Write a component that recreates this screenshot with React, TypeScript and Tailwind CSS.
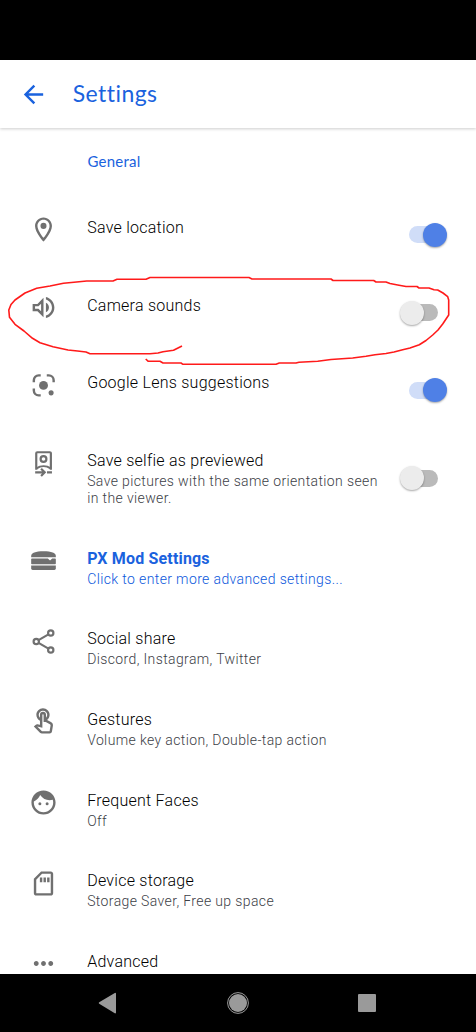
import { useState } from 'react';
import type { ReactNode } from 'react';
import {
  MdArrowBack,
  MdFace,
  MdMoreHoriz,
  MdOutlineLocationOn,
  MdOutlineSdCard,
  MdOutlineTouchApp,
  MdOutlineVolumeUp,
} from 'react-icons/md';

type Setting = {
  title: string;
  summary?: string;
  icon: ReactNode;
  toggle?: boolean;
  highlight?: boolean;
};

function LensIcon() {
  return (
    <svg viewBox="0 0 24 24" className="w-[29px] h-[29px]" fill="none" stroke="currentColor" strokeWidth="2">
      <path d="M4 9.3V7.6a4 4 0 0 1 4-4h1.7M14.7 3.6h1.7a4 4 0 0 1 4 4v1.7M4 14.5v1.7a4 4 0 0 0 4 4h1.7" />
      <circle cx="12" cy="11.9" r="3.7" fill="currentColor" stroke="none" />
      <circle cx="18.3" cy="18.1" r="2.1" fill="currentColor" stroke="none" />
    </svg>
  );
}

function SelfieIcon() {
  return (
    <svg viewBox="0 0 24 24" className="w-[29px] h-[29px]" fill="none" stroke="currentColor" strokeWidth="1.8">
      <path d="M6 17.2V3.5a.8.8 0 0 1 .8-.8h10.5a.8.8 0 0 1 .8.8v13.7" />
      <path d="M6.2 16c3.5-2.3 8.2-2.3 11.7 0" />
      <circle cx="12" cy="8.3" r="2.4" />
      <path d="M5.1 19.3h7M10 16.3l3 3-3 3M14.9 19.3H19" />
    </svg>
  );
}

function BurgerIcon() {
  return (
    <svg viewBox="0 0 24 24" className="w-[29px] h-[29px]" fill="currentColor">
      <path d="M1.8 8.2C1.8 5.6 5.5 4.3 12 4.3s10.2 1.3 10.2 3.9v1.2H1.8z" />
      <path d="M2.4 10.4h13.2l1.8 1.7 1.8-1.7h2.4a.6.6 0 0 1 .6.6v3.4a.6.6 0 0 1-.6.6H2.4a.6.6 0 0 1-.6-.6V11a.6.6 0 0 1 .6-.6z" />
      <path d="M1.8 16.2h20.4v2.4a1.2 1.2 0 0 1-1.2 1.2H3a1.2 1.2 0 0 1-1.2-1.2z" />
    </svg>
  );
}

function ShareIcon() {
  return (
    <svg viewBox="0 0 24 24" className="w-[29px] h-[29px]" fill="none" stroke="currentColor" strokeWidth="1.8">
      <circle cx="18" cy="5" r="2.2" />
      <circle cx="6" cy="12" r="2.2" />
      <circle cx="18" cy="19" r="2.2" />
      <path d="M7.9 10.9l8.2-4.8M7.9 13.1l8.2 4.8" />
    </svg>
  );
}

const settings: Setting[] = [
  { title: 'Save location', icon: <MdOutlineLocationOn size={29} />, toggle: true },
  { title: 'Camera sounds', icon: <MdOutlineVolumeUp size={29} />, toggle: false },
  { title: 'Google Lens suggestions', icon: <LensIcon />, toggle: true },
  {
    title: 'Save selfie as previewed',
    summary: 'Save pictures with the same orientation seen in the viewer.',
    icon: <SelfieIcon />,
    toggle: false,
  },
  {
    title: 'PX Mod Settings',
    summary: 'Click to enter more advanced settings...',
    icon: <BurgerIcon />,
    highlight: true,
  },
  { title: 'Social share', summary: 'Discord, Instagram, Twitter', icon: <ShareIcon /> },
  { title: 'Gestures', summary: 'Volume key action, Double-tap action', icon: <MdOutlineTouchApp size={29} /> },
  { title: 'Frequent Faces', summary: 'Off', icon: <MdFace size={29} /> },
  { title: 'Device storage', summary: 'Storage Saver, Free up space', icon: <MdOutlineSdCard size={29} /> },
  { title: 'Advanced', icon: <MdMoreHoriz size={29} /> },
];

function Toggle({ label, initial }: { label: string; initial: boolean }) {
  const [on, setOn] = useState(initial);

  return (
    <button
      role="switch"
      aria-checked={on}
      aria-label={label}
      onClick={() => setOn(!on)}
      className={`relative shrink-0 self-center w-[29px] h-[17px] mr-[38px] rounded-full ${on ? 'bg-[#d0ddf8]' : 'bg-[#bababa]'}`}
    >
      <span
        className={`absolute -top-[3.5px] w-6 h-6 rounded-full shadow-[0_1px_2px_rgba(0,0,0,0.35)] ${on ? 'left-[14px] bg-[#4f80e6]' : '-left-[9.5px] bg-[#ececec]'}`}
      />
    </button>
  );
}

function SettingRow({ title, summary, icon, toggle, highlight }: Setting) {
  return (
    <div className={`flex shrink-0 ${summary ? 'min-h-[80.6px]' : 'h-[77.8px]'}`}>
      <div className="w-[87.2px] shrink-0 pt-[19.2px] pl-[29px] text-[#707070]">{icon}</div>
      <div className="flex-1 pt-[20.8px] pb-[19.4px]">
        <div className={`text-base leading-[21px] ${highlight ? 'font-bold tracking-[0.17px] text-[#1a62de]' : 'font-light tracking-[0.25px] text-black'}`}>
          {title}
        </div>
        {summary && (
          <div className={`mt-[2px] w-[296px] text-sm leading-[17.2px] font-light tracking-[0.375px] ${highlight ? 'text-[#0b57dc]' : 'text-[#3c4046]'}`}>
            {summary}
          </div>
        )}
      </div>
      {toggle !== undefined && <Toggle label={title} initial={toggle} />}
    </div>
  );
}

// Freehand red loop drawn round the "Camera sounds" row
function Scribble() {
  return (
    <svg className="absolute left-0 top-0 pointer-events-none" width="476" height="1032" fill="none" stroke="#ff1a1a" strokeWidth="1.6" strokeLinejoin="round">
      <path d="M182 346L173.5 350.3L163 351.7L158 353L150 353.7H90L86 352L77.5 351L68 350L53 346.7L40 342.7L32.5 338.3L24 331L15 324.3L9.5 317.3L8.8 310L11 304.5L15 300L25 293L36.7 288.3L50 286L63.5 283.3L74 282.3L86.7 281H113L117 279.3H146L150 277.5H249L252 279H331L333 280.5H373.7L376 282H386L390 283.5L397.7 285L406 286.5H417L419 288H429L434 289.8L437.7 290L443 293L447.7 296.7L448.7 300V315L442.7 324L438 330L432.7 335L426 340.5L419.3 344.7L410 348L402.7 349.7L394 352L386 353.5L375 354.7L366 356.2L352.7 358L331 359.5L317.7 361.3L299 362.2L296 363H279.3L276 364.3H183L181 363H163L160 361.3H148.3L145.7 359" />
    </svg>
  );
}

export default function App() {
  return (
    <div className="relative flex flex-col w-[476px] h-[1032px] overflow-hidden bg-white font-['Roboto',sans-serif]">
      <div className="h-[60px] shrink-0 bg-black" />

      <header className="flex items-center h-[68px] shrink-0 bg-white shadow-[0_1px_3px_rgba(0,0,0,0.2)]">
        <button aria-label="Back" className="ml-[19px] text-[#1a62de]">
          <MdArrowBack size={29} />
        </button>
        <h1 className="ml-[24.7px] -mt-[2px] text-[23px] leading-7 tracking-[0.45px] text-[#1a62de] font-['Lato',sans-serif]">Settings</h1>
      </header>

      <main className="flex flex-col flex-1 min-h-0 overflow-hidden">
        <h2 className="h-[68px] shrink-0 pt-[23px] pl-[87.4px] text-[15px] leading-5 tracking-[0.25px] text-[#1a62de] font-['Lato',sans-serif]">
          General
        </h2>
        {settings.map(s => (
          <SettingRow key={s.title} {...s} />
        ))}
      </main>

      {/* System navigation bar */}
      <nav className="flex items-center h-[58px] shrink-0 bg-black text-[#9a9a9a]">
        <svg width="476" height="58" fill="currentColor">
          <path d="M116 19.6v19a.8.8 0 0 1-1.2.7L99.2 29.8a1 1 0 0 1 0-1.6l15.6-9.3a.8.8 0 0 1 1.2.7z" />
          <circle cx="238" cy="29" r="9" />
          <circle cx="238" cy="29" r="10.4" fill="none" stroke="currentColor" strokeWidth="1" />
          <rect x="358" y="20" width="18" height="18" rx="1" />
        </svg>
      </nav>

      <Scribble />
    </div>
  );
}
